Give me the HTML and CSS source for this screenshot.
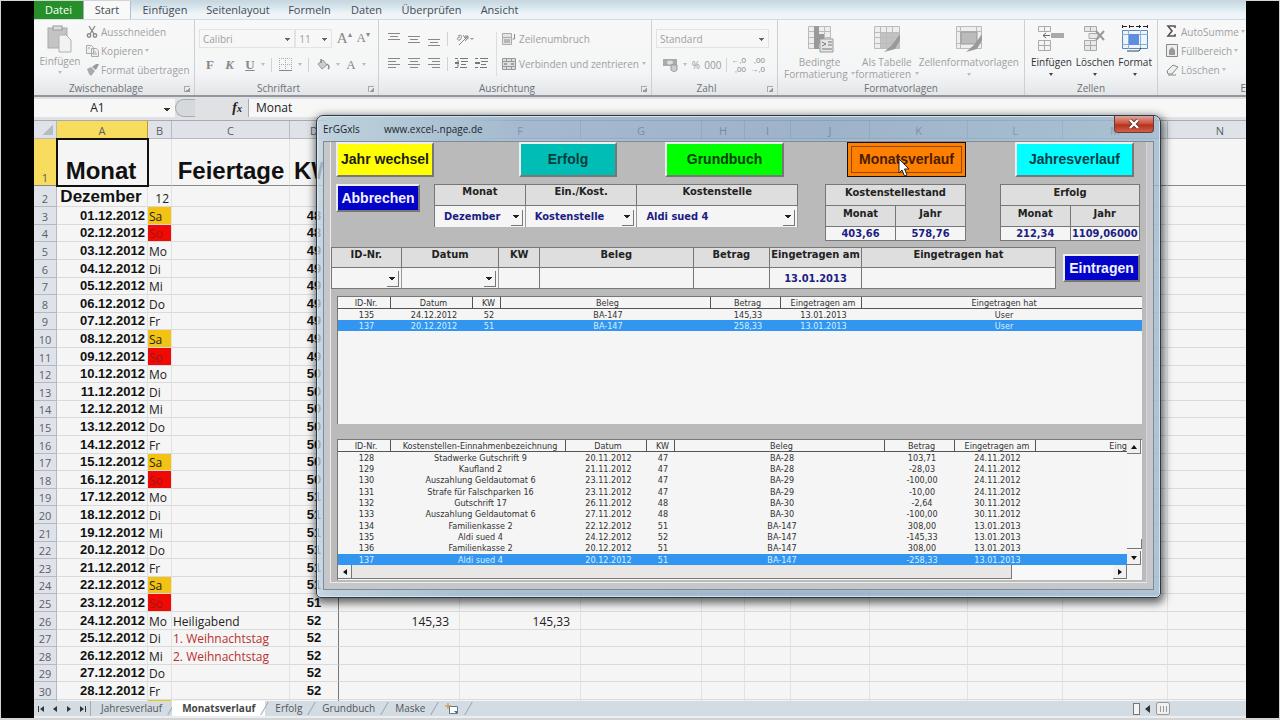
FILE: index.html
```html
<!DOCTYPE html>
<html lang="de">
<head>
<meta charset="utf-8">
<title>ErGGxls</title>
<link rel="stylesheet" href="styles.css">
</head>
<body>
<div class="screen">
<div class="app">
  <nav class="tabs">
    <button class="tab file">Datei</button>
    <button class="tab active">Start</button>
    <button class="tab t3">Einfügen</button>
    <button class="tab t4">Seitenlayout</button>
    <button class="tab t5">Formeln</button>
    <button class="tab t6">Daten</button>
    <button class="tab t7">Überprüfen</button>
    <button class="tab t8">Ansicht</button>
  </nav>

  <div class="ribbon">
    <section class="group">
      <div class="body">
        <button class="big paste">
          <svg width="26" height="28" viewBox="0 0 26 28"><rect x="1" y="3" width="19" height="20" fill="#c4c4c4" stroke="#a9a9a9"/><rect x="6" y="1" width="9" height="4" fill="#ddd" stroke="#999"/><path d="M12 10h7l5 5v12h-12z" fill="#f2f2f2" stroke="#b0b0b0"/></svg>
          <span>Einfügen</span><i class="dd"></i>
        </button>
        <div class="stack">
          <button class="row"><svg width="13" height="13" viewBox="0 0 13 13" fill="none" stroke="#8c8c8c" stroke-width="1.4"><path d="M3 1l5 8M9 1L4 9"/><circle cx="3" cy="10.500" r="1.700"/><circle cx="9" cy="10.500" r="1.700"/></svg><span>Ausschneiden</span></button>
          <button class="row"><svg width="13" height="13" viewBox="0 0 13 13" fill="#eee" stroke="#aaa"><path d="M.5 1.500h5l2 2v6h-7zM5.500 4.500h5l2 2v6h-7z"/><path d="M7 8h3M7 10h4M2 4h2"/></svg><span>Kopieren</span><i class="dd"></i></button>
          <button class="row"><svg width="13" height="13" viewBox="0 0 13 13"><path d="M1 6l4-2 4 4-4 5-2-2z" fill="#aaa"/><path d="M6 4l4-3 3 0-3 6z" fill="#999"/></svg><span>Format übertragen</span></button>
        </div>
      </div>
      <div class="caption">Zwischenablage<i class="launch"></i></div>
    </section>

    <section class="group">
      <div class="body lines">
        <div class="line">
          <select class="combo font" aria-label="Schriftart"><option>Calibri</option></select><select class="combo size" aria-label="Schriftgrad"><option>11</option></select>
          <button class="ser big-a">A<sup>▴</sup></button><button class="ser">A<sup>▾</sup></button>
        </div>
        <div class="line spread">
          <button class="ser b">F</button><button class="ser b it">K</button><button class="ser b un">U</button><i class="dd"></i><i class="sep"></i>
          <svg width="13" height="13" viewBox="0 0 13 13" fill="none" stroke="#aaa"><path d="M.5 0v12M6.500 0v12M12.500 0v12M0 .5h13M0 6.500h13" stroke-dasharray="1 1"/><path d="M0 12.500h13" stroke="#888"/></svg><i class="dd"></i><i class="sep"></i>
          <svg width="14" height="13" viewBox="0 0 14 13"><path d="M2 6l5-4 4 5-5 4z" fill="#ccc" stroke="#999"/><path d="M5 1v4M11 6c3 2 2 4 1 5" fill="none" stroke="#888" stroke-width="1.500"/></svg><i class="dd"></i>
          <button class="ser">A</button><i class="dd"></i>
        </div>
      </div>
      <div class="caption">Schriftart<i class="launch"></i></div>
    </section>

    <section class="group align">
      <div class="body cols">
        <div class="icongrid">
          <svg width="12" height="14" viewBox="0 0 12 14" stroke="#888"><path d="M0 1.500h12M2 4.500h8M0 7.500h12"/></svg>
          <svg width="12" height="14" viewBox="0 0 12 14" stroke="#888"><path d="M0 4.500h12M2 7.500h8M0 10.500h12"/></svg>
          <svg width="12" height="14" viewBox="0 0 12 14" stroke="#888"><path d="M0 7.500h12M2 10.500h8M0 13.500h12"/></svg>
          <i class="sep"></i>
          <svg class="wide" width="20" height="14" viewBox="0 0 20 14"><path d="M3 4c3-2 5 0 2 4M5 5c-4 0-3 4 0 3M8 3l3 4M9 6c3-3 5 1 1 3" stroke="#888" fill="none"/><path d="M4 13L13 4M13 4v3M13 4h-3" stroke="#888" fill="none"/><path d="M15 6h4l-2 2z" fill="#999"/></svg>
          <svg width="12" height="14" viewBox="0 0 12 14" stroke="#888"><path d="M0 1.500h12M0 4.500h8M0 7.500h12M0 10.500h8"/></svg>
          <svg width="12" height="14" viewBox="0 0 12 14" stroke="#888"><path d="M0 1.500h12M2 4.500h8M0 7.500h12M2 10.500h8"/></svg>
          <svg width="12" height="14" viewBox="0 0 12 14" stroke="#888"><path d="M0 1.500h12M4 4.500h8M0 7.500h12M4 10.500h8"/></svg>
          <i class="sep"></i>
          <svg width="13" height="14" viewBox="0 0 13 14" stroke="#777" fill="none"><path d="M0 1.500h3M5 1.500h8M6 4.500h7M6 7.500h5M0 10.500h3M5 10.500h7M3 3v7" /><path d="M0 6h4" stroke-width="2"/></svg>
          <svg width="13" height="14" viewBox="0 0 13 14" stroke="#777" fill="none"><path d="M0 1.500h3M5 1.500h8M6 4.500h7M6 7.500h5M0 10.500h3M5 10.500h7" /><path d="M0 6h5" stroke-width="2"/></svg>
        </div>
        <div class="wraps">
          <button class="row"><svg width="14" height="14" viewBox="0 0 14 14" fill="#e4e4e4" stroke="#aaa"><path d="M.5 1.500h9v4h-9zM.5 5.500h9v7h-9z"/><path d="M2 8h6M2 10h6M12.500 2v5h-2" stroke="#888" fill="none"/></svg><span>Zeilenumbruch</span></button>
          <button class="row"><svg width="14" height="14" viewBox="0 0 14 14" fill="#ddd" stroke="#999"><path d="M.5 1.500h13v11h-13zM.5 4.500h13M.5 9.500h13M4.500 1v3M9.500 1v3M4.500 10v3M9.500 10v3"/><path d="M2 7h3M9 7h3" stroke="#666"/></svg><span>Verbinden und zentrieren</span><i class="dd"></i></button>
        </div>
      </div>
      <div class="caption">Ausrichtung<i class="launch"></i></div>
    </section>

    <section class="group">
      <div class="body lines">
        <div class="line"><select class="combo std" aria-label="Zahlenformat"><option>Standard</option></select></div>
        <div class="line spread">
          <svg width="16" height="14" viewBox="0 0 16 14"><path d="M0 1h14v7H0z" fill="#aaa"/><ellipse cx="7" cy="4.500" rx="3" ry="2" fill="#ddd"/><path d="M8 7h6v5c-2 2-4 2-6 0z" fill="#ccc" stroke="#999"/></svg><i class="dd"></i>
          <button class="num">%</button><button class="num">000</button><i class="sep"></i>
          <button class="dec"><span>←,0</span><span>,00</span></button><button class="dec"><span>,00</span><span>→,0</span></button>
        </div>
      </div>
      <div class="caption">Zahl<i class="launch"></i></div>
    </section>

    <section class="group">
      <div class="body bigs">
        <button class="big two"><svg width="28" height="28" viewBox="0 0 28 28"><path d="M2.500 1.500h22v22h-22z" fill="#eee" stroke="#bbb"/><path d="M2 6.500h22M2 12.500h22M2 18.500h22M18.500 2v22" stroke="#bbb"/><path d="M8 1h5v8h5v9h-5v6h-5z" fill="#999"/><path d="M14 14h13v13h-13z" fill="#e6e6e6" stroke="#999"/><path d="M16 17l4 2-4 2M22 17h4M22 20h4M16 24h10" stroke="#777" fill="none"/></svg><span>Bedingte<br>Formatierung <i class="dd"></i></span></button>
        <button class="big two"><svg width="28" height="28" viewBox="0 0 28 28"><path d="M1.500 1.500h25v22h-25z" fill="#eee" stroke="#bbb"/><path d="M8 7h18v16h-18z" fill="#c2c2c2"/><path d="M1 7.500h25M1 12.500h25M1 18.500h25M7.500 2v22M13.500 2v22M19.500 2v22" stroke="#bbb"/><path d="M27 9l-8 11-8 7 11-3 5-9z" fill="#999"/></svg><span>Als Tabelle<br>formatieren <i class="dd"></i></span></button>
        <button class="big"><svg width="28" height="28" viewBox="0 0 28 28"><path d="M1.500 1.500h25v22h-25z" fill="#eee" stroke="#bbb"/><path d="M1 6.500h25M1 18.500h25M5.500 2v22M21.500 2v22" stroke="#bbb"/><path d="M6 7h16v12h-16z" fill="#bbb" stroke="#999"/><path d="M27 9l-8 11-8 7 11-3 5-9z" fill="#999"/></svg><span>Zellenformatvorlagen</span><i class="dd"></i></button>
      </div>
      <div class="caption plain">Formatvorlagen</div>
    </section>

    <section class="group">
      <div class="body bigs live">
        <button class="big"><svg width="28" height="28" viewBox="0 0 28 28"><path d="M1.500 1.500h12v5h-12zM1.500 15.500h12v10h-12zM7.500 1v5M7.500 15v10M1 20.500h12" fill="#f4f4f4" stroke="#aaa"/><path d="M14 8h13v5h-13z" fill="#aaa"/><path d="M6 10.500h7M9 8l-3 2.500 3 2.500" stroke="#666" fill="none"/></svg><span>Einfügen</span><i class="dd"></i></button>
        <button class="big"><svg width="28" height="28" viewBox="0 0 28 28"><path d="M3.500 1.500h12v5h-12zM3.500 15.500h12v10h-12zM9.500 1v5M9.500 15v10M3 20.500h12M8 8.500h9v5h-9z" fill="#e8e8e8" stroke="#aaa"/><path d="M15 6l8 9M23 6l-8 9" stroke="#999" stroke-width="2"/></svg><span>Löschen</span><i class="dd"></i></button>
        <button class="big"><svg width="28" height="28" viewBox="0 0 28 28"><path d="M1.500 5.500h25v18h-25z" fill="#eef4fb" stroke="#5a88b8"/><path d="M1 9.500h26M1 19.500h26M7.500 5v19M19.500 5v19" stroke="#8ab0d6"/><path d="M8 9h10v11h-10z" fill="#5d8de0"/><path d="M1 1.500h26M1.500 0v3M8.500 0v3M18.500 0v3M26.500 0v3" stroke="#223" stroke-dasharray="5 2"/><path d="M6 26h12l2-3" stroke="#345" fill="none"/></svg><span>Format</span><i class="dd"></i></button>
      </div>
      <div class="caption plain">Zellen</div>
    </section>

    <section class="group last">
      <div class="body">
        <div class="stack">
          <button class="row"><svg width="13" height="13" viewBox="0 0 13 13"><path d="M9 3V1H2l4 5-4 5h7V9" fill="none" stroke="#555" stroke-width="1.600"/></svg><span>AutoSumme</span><i class="dd"></i></button>
          <button class="row"><svg width="13" height="13" viewBox="0 0 13 13"><path d="M.5 .5h11v12h-11z" fill="#eee" stroke="#888"/><path d="M3 6h6l-3-3zM3 6h6v5H3z" fill="#999"/></svg><span>Füllbereich</span><i class="dd"></i></button>
          <button class="row"><svg width="13" height="13" viewBox="0 0 13 13"><path d="M1 8l6-6 5 2-6 7H2z" fill="#eee" stroke="#888"/><path d="M2 12h8" stroke="#888"/></svg><span>Löschen</span><i class="dd"></i></button>
        </div>
      </div>
      <div class="caption edge">E</div>
    </section>
  </div>

  <div class="formula">
    <select class="namebox" aria-label="Namenfeld"><option>A1</option></select>
    <div class="fx"><i class="knob"></i><em>f<small>x</small></em></div>
    <input class="content" aria-label="Bearbeitungsleiste" value="Monat">
  </div>

  <main class="sheet">
    <table class="cells">
      <colgroup><col class="c0"><col class="cA"><col class="cB"><col class="cC"><col class="cD"><col class="cE"><col class="cE"><col class="cE"><col class="cH"><col class="cI"><col class="cJ"><col class="cK"><col class="cL"><col class="cM"><col></colgroup>
      <thead><tr id="letters"></tr></thead>
      <tbody id="days"></tbody>
    </table>
  </main>

  <footer class="sheets">
    <div class="nav">
      <button aria-label="Erstes Blatt"><svg width="8" height="8" viewBox="0 0 8 8"><path d="M1 1h1v6h-1zM7 1v6l-4-3z" fill="#333"/></svg></button>
      <button aria-label="Vorheriges Blatt"><svg width="8" height="8" viewBox="0 0 8 8"><path d="M6 1v6l-4-3z" fill="#333"/></svg></button>
      <button aria-label="Nächstes Blatt"><svg width="8" height="8" viewBox="0 0 8 8"><path d="M2 1v6l4-3z" fill="#333"/></svg></button>
      <button aria-label="Letztes Blatt"><svg width="8" height="8" viewBox="0 0 8 8"><path d="M6 1h1v6h-1zM1 1v6l4-3z" fill="#333"/></svg></button>
    </div>
    <button class="st">Jahresverlauf</button><button class="st on">Monatsverlauf</button><button class="st">Erfolg</button><button class="st">Grundbuch</button><button class="st">Maske</button>
    <button class="st new" aria-label="Neues Blatt"><svg width="14" height="12" viewBox="0 0 14 12"><path d="M4.500 3.500h8v7h-8z" fill="#fff" stroke="#678"/><path d="M3 0v6M0 3h6" stroke="#d78b2c"/><path d="M9 8l3 0 0 3z" fill="#567"/></svg></button>
    <div class="hs"><i class="split"></i><svg width="6" height="8" viewBox="0 0 6 8"><path d="M5 0v8l-5-4z" fill="#333"/></svg><i class="grip"></i></div>
  </footer>
</div>

<div class="dialog" role="dialog" aria-label="ErGGxls">
  <header class="title"><span class="name">ErGGxls</span><span>www.excel-.npage.de</span><button class="close" aria-label="Schließen"><svg width="12" height="10" viewBox="0 0 12 10"><path d="M2 1l8 8M10 1l-8 8" stroke="#6b2a22" stroke-width="4"/><path d="M2 1l8 8M10 1l-8 8" stroke="#fff" stroke-width="2.400"/></svg></button></header>
  <div class="client">
    <div class="form">
      <div class="actions">
        <button class="act yellow">Jahr wechsel</button>
        <button class="act teal">Erfolg</button>
        <button class="act green">Grundbuch</button>
        <button class="act orange">Monatsverlauf<svg class="pointer" width="12" height="19" viewBox="0 0 12 19"><path d="M1 1v14l3-3 2.500 6 2.500-1-2.500-6h4.500z" fill="#fff" stroke="#222"/></svg></button>
        <button class="act cyan">Jahresverlauf</button>
      </div>

      <div class="upper">
        <button class="act blue">Abbrechen</button>
        <div class="pick">
          <label for="m">Monat</label><label for="e">Ein./Kost.</label><label for="k">Kostenstelle</label>
          <select id="m"><option>Dezember</option></select><select id="e"><option>Kostenstelle</option></select><select id="k"><option>Aldi sued 4</option></select>
        </div>
        <table class="sum"><tr><th colspan="2">Kostenstellestand</th></tr><tr><th>Monat</th><th>Jahr</th></tr><tr><td>403,66</td><td>578,76</td></tr></table>
        <table class="sum"><tr><th colspan="2">Erfolg</th></tr><tr><th>Monat</th><th>Jahr</th></tr><tr><td>212,34</td><td>1109,06000</td></tr></table>
      </div>

      <div class="entry">
        <div class="fields">
          <label for="i1">ID-Nr.</label><label for="i2">Datum</label><label for="i3">KW</label><label for="i4">Beleg</label><label for="i5">Betrag</label><label for="i6">Eingetragen am</label><label for="i7">Eingetragen hat</label>
          <select id="i1"><option></option></select><select id="i2"><option></option></select><input id="i3"><input id="i4"><input id="i5"><input id="i6" value="13.01.2013"><input id="i7">
        </div>
        <button class="act blue">Eintragen</button>
      </div>

      <div class="list first">
        <table>
          <colgroup><col class="w53"><col class="w82"><col class="w28"><col class="w210"><col class="w70"><col class="w81"><col></colgroup>
          <thead><tr><th>ID-Nr.</th><th>Datum</th><th>KW</th><th>Beleg</th><th>Betrag</th><th>Eingetragen am</th><th>Eingetragen hat</th></tr></thead>
          <tbody id="list1"></tbody>
        </table>
      </div>

      <div class="list second">
        <table>
          <colgroup><col class="w53"><col class="w175"><col class="w81"><col class="w28"><col class="w210"><col class="w70"><col class="w81"><col></colgroup>
          <thead><tr><th>ID-Nr.</th><th>Kostenstellen-Einnahmenbezeichnung</th><th>Datum</th><th>KW</th><th>Beleg</th><th>Betrag</th><th>Eingetragen am</th><th class="cut">Eing</th></tr></thead>
          <tbody id="list2"></tbody>
        </table>
        <div class="vbar"><button class="up" aria-label="Nach oben"></button><i></i><button class="down" aria-label="Nach unten"></button></div>
        <div class="hbar"><button class="left" aria-label="Nach links"></button><i></i><button class="right" aria-label="Nach rechts"></button></div>
      </div>
    </div>
  </div>
</div>
</div>
<script src="app.js"></script>
</body>
</html>
```

FILE: styles.css
```css
* { box-sizing: border-box; }
body { margin: 0; height: 100vh; font-family: "Open Sans", "Noto Sans", sans-serif; font-size: 11px; overflow: hidden; }
button, select, input { font: inherit; color: inherit; margin: 0; padding: 0; border: 0; background: none; border-radius: 0; }
button { white-space: nowrap; }
select { appearance: none; }
svg { flex: none; display: block; }
.screen { position: relative; height: 100vh; background: #000; border: 1px solid #d4d4d4; border-bottom-width: 2px; padding: 0 33px; }
.app { height: 100%; display: flex; flex-direction: column; background: #f5f5f5; overflow: hidden; }

.tabs { flex: none; height: 18px; display: flex; background: linear-gradient(#c3d8e4, #eef4f7 70%); color: #454b52; }
.tab { line-height: 16px; text-align: center; }
.file { width: 49px; background: #25902a; color: #fff; }
.active { width: 48px; background: #f8f9f9; border-left: 1px solid #aab; border-right: 1px solid #bbc; }
.t3 { width: 68px; } .t4 { width: 78px; } .t5 { width: 65px; } .t6 { width: 49px; } .t7 { width: 81px; } .t8 { width: 55px; }

.ribbon { flex: none; height: 78px; display: flex; font-size: 10px; color: #a0a0a0; background: linear-gradient(#f8f8f8, #f4f5f6 70%, #e3e6e9); border-bottom: 2px solid #93979b; border-top: 1px solid #d6dade; }
.group { flex: none; display: flex; flex-direction: column; border-right: 1px solid #cdd0d3; white-space: nowrap; }
.group:nth-child(1) { width: 161px; } .group:nth-child(2) { width: 184px; } .group:nth-child(3) { width: 273px; }
.group:nth-child(4) { width: 126px; } .group:nth-child(5) { width: 247px; } .group:nth-child(6) { width: 133px; }
.group.last { flex: 1; width: 0; overflow: hidden; border: 0; }
.body { flex: 1; display: flex; min-height: 0; }
.caption { position: relative; flex: none; height: 14px; line-height: 14px; text-align: center; color: #6d7175; padding-right: 16px; }
.caption.plain { padding: 0; }
.caption.edge { text-align: right; padding: 0; }
.launch { position: absolute; right: 4px; top: 5px; width: 6px; height: 6px; border-left: 1px solid #aaa; border-top: 1px solid #aaa; background: linear-gradient(135deg, transparent 50%, #999 50%); }
.dd { display: inline-block; border: 2px solid transparent; border-top: 3px solid #bbb; border-bottom: 0; flex: none; }
.sep { width: 1px; height: 14px; background: #d2d2d2; }
.big { display: flex; flex-direction: column; align-items: center; padding-top: 5px; line-height: 12px; gap: 2px; }
.big .dd { margin-top: 2px; }
.paste { width: 52px; }
.stack { display: flex; flex-direction: column; padding: 2px 0 0; }
.row { display: flex; align-items: center; gap: 3px; height: 20px; }
.stack .row { height: 19px; gap: 2px; }
.last .stack { padding-left: 8px; }
.lines { flex-direction: column; gap: 7px; padding: 9px 8px 0 4px; }
.line { display: flex; align-items: center; height: 19px; gap: 5px; }
.spread { justify-content: space-between; padding: 0 4px 0 7px; gap: 0; }
.combo { height: 19px; border: 1px solid #e3e3e3; padding-left: 3px; background: linear-gradient(#666, #666) no-repeat right 4px top 8px / 5px 1px, linear-gradient(#666, #666) no-repeat right 5px top 9px / 3px 1px, linear-gradient(#666, #666) no-repeat right 6px top 10px / 1px 1px; }
.font { width: 101px; margin-right: -5px; } .size { width: 38px; }
.std { width: 118px; }
.ser { font-family: "Liberation Serif", serif; font-size: 13px; color: #888; }
.ser sup { font-size: 8px; }
.big-a { font-size: 15px; }
.b { font-weight: bold; margin-right: 5px; } .it { font-style: italic; } .un { text-decoration: underline; margin-right: 0; }
.num { font-size: 10px; color: #999; }
.dec { font-size: 8px; line-height: 9px; color: #888; text-align: right; font-family: "Liberation Sans", sans-serif; }
.dec span { display: block; }
.cols { padding: 12px 0 0 9px; }
.icongrid { display: grid; grid-template-columns: 20px 20px 19px 8px 20px 20px; grid-template-rows: 25px 20px; align-items: start; width: 108px; }
.icongrid .wide { grid-column: span 2; }
.wraps { border-left: 1px solid #ddd; padding-left: 5px; height: 44px; display: flex; flex-direction: column; gap: 6px; }
.wraps .row { height: 19px; margin-top: -3px; margin-bottom: 3px; }
.bigs { justify-content: space-between; padding: 0 5px 0 6px; }
.bigs .big { gap: 3px; }
.two .dd { margin: 0 0 3px 1px; }
.live { color: #333; }
.live .dd { border-top-color: #444; }

.formula { flex: none; height: 24px; display: flex; padding: 2px 0 3px; background: #dfe1e4; line-height: 18px; font-size: 12px; color: #222; border-bottom: 1px solid #aaa; }
.namebox { width: 141px; text-align: center; padding-right: 14px; background: linear-gradient(#333, #333) no-repeat right 5px top 9px / 6px 1px, linear-gradient(#333, #333) no-repeat right 6px top 10px / 4px 1px, linear-gradient(#333, #333) no-repeat right 7px top 11px / 2px 1px, #f7f7f7; text-align-last: center; }
.fx { width: 74px; display: flex; justify-content: space-between; padding-right: 6px; font-family: "Liberation Serif", serif; font-size: 14px; font-weight: bold; border-right: 1px solid #aaa; }
.fx small { font-size: 10px; }
.knob { width: 20px; border: 1px solid #aaa; border-right: 0; border-radius: 9px 0 0 9px; background: #d5d8dc; }
.content { flex: 1; min-width: 0; background: #f7f7f7; padding-left: 7px; }

.sheet { flex: 1; min-height: 0; overflow: hidden; }
.cells { width: calc(100% + 27px); table-layout: fixed; border-collapse: separate; border-spacing: 0; font-size: 12px; color: #222; }
.cells th, .cells td { padding: 0; border-right: 1px solid #e2e2e2; border-bottom: 1px solid #dadada; line-height: 15px; overflow: hidden; white-space: nowrap; vertical-align: bottom; }
.c0 { width: 23px; } .cA { width: 91px; } .cB { width: 24px; } .cC { width: 118px; } .cD { width: 49px; } .cE { width: 121px; }
.cH { width: 43px; } .cI { width: 46px; } .cJ { width: 79px; } .cK { width: 98px; } .cL { width: 95px; } .cM { width: 105px; }
.cells th { font-weight: normal; font-size: 11px; text-align: center; background: #dfe3e9; color: #5a5f66; border-color: #b5bac1; }
.cells thead th { height: 18px; }
.cells .sel { background: #f7dc5e; border-color: #b99b2a; }
.cells .corner { background: linear-gradient(135deg, transparent 50%, #b6bcc4 50%) no-repeat right 3px bottom 3px / 10px 10px, #dfe3e9; }
.cells .r1 { height: 47px; } .cells .r2 { height: 21px; }
.cells .d { height: 18px; } .cells .d.short { height: 17px; }
.cells .r1 th, .cells .r1 td { border-bottom-color: #888; }
.cells .r1 td { font: bold 24px/28px "Liberation Sans", Arial, sans-serif; color: #111; text-align: center; overflow: visible; }
.cells .r1 td:nth-child(2) { outline: 2px solid #111; outline-offset: -1px; }
.cells .r1 td:nth-child(5) { text-align: left; padding-left: 4px; overflow: hidden; }
.cells td:nth-child(5) { border-right-color: #777; text-align: center; font: bold 13px/16px "Liberation Sans", Arial, sans-serif; color: #111; }
.cells td:nth-child(2) { text-align: right; font: bold 13px/16px "Liberation Sans", Arial, sans-serif; color: #111; padding-right: 2px; }
.cells .r2 td:nth-child(2) { font-size: 17px; line-height: 19px; text-align: center; }
.cells .r1 td:nth-child(2) { font-size: 24px; line-height: 28px; text-align: center; }
.cells .r1 td:nth-child(5) { font-size: 24px; line-height: 28px; }
.cells td:nth-child(3), .cells td:nth-child(4) { padding-left: 1px; }
.cells .r2 td:nth-child(3) { text-align: right; padding-right: 2px; }
.cells td.sa { background: #f2c313; }
.cells td.so { background: #f00a06; color: #a5150c; }
.cells td.hol { color: #b93030; }
.cells td.val { text-align: right; padding-right: 10px; }

.sheets { flex: none; height: 17px; display: flex; align-items: stretch; background: #d3dbe3; color: #555; font-size: 10px; border-bottom: 2px solid #e9eef3; }
.nav { width: 57px; display: flex; align-items: center; justify-content: space-around; border-right: 1px solid #aaa; }
.st { position: relative; padding: 0 10px; line-height: 15px; }
.st::after { content: ""; position: absolute; right: 0; top: 1px; bottom: 1px; width: 1px; background: #98a2ac; transform: skewX(-30deg); }
.st.on { background: #fff; font-weight: bold; color: #444; padding: 0 10px; }
.st.new { width: 34px; }
.hs { margin-left: auto; width: 113px; display: flex; align-items: center; gap: 5px; }
.split { width: 7px; height: 12px; border: 1px solid #777; background: #f4f4f4; }
.grip { width: 14px; height: 13px; border: 1px solid #999; border-radius: 2px; background: repeating-linear-gradient(90deg, #999 0 1px, transparent 1px 3px) no-repeat center / 7px 6px, #f0f0f0; }

.dialog { position: absolute; left: 315px; right: 118px; top: 114px; border: 1px solid #2d3a45; border-radius: 7px 7px 5px 5px; padding: 0 6px 7px; background: linear-gradient(90deg, rgba(190, 209, 222, .78), #bccfdc 2%, #a9c0d1 18%, rgba(140, 168, 196, .7) 24%, rgba(126, 156, 186, .68) 60%, rgba(155, 182, 204, .78)); box-shadow: inset 0 0 0 1px rgba(225, 240, 250, .7), 1px 3px 9px 2px rgba(0, 0, 0, .6); }
.title { display: flex; height: 25px; align-items: center; color: #20262c; font-size: 10px; }
.name { width: 61px; }
.close { align-self: flex-start; margin: 0 0 0 auto; width: 40px; height: 17px; display: flex; align-items: center; justify-content: center; border: 1px solid #6a3a38; border-top: 0; border-radius: 0 0 4px 4px; background: linear-gradient(#dba79d, #cb4a35 50%, #b5301c 55%, #d0604a); }
.client { background: #c6c7ca; border: 1px solid #7f8b95; padding: 0 6px 6px; }
.form { background: #bababa; border: 1px solid #ececec; border-top: 0; border-right-color: #d6d6d6; padding: 0 4px 2px 0; font-family: "DejaVu Sans Condensed", "DejaVu Sans", sans-serif; display: flex; flex-direction: column; }
.act { font: bold 14px/18px "Liberation Sans", Arial, sans-serif; color: #1c1c1c; border: 2px solid; border-color: #eee #777 #777 #eee; }
.actions { display: grid; grid-template-columns: 98fr 85fr 98fr 48fr 119fr 63fr 119fr 49fr 119fr 8fr; padding-left: 5px; height: 35px; }
.actions .act { padding-bottom: 2px; }
.actions .act:nth-child(1) { grid-column: 1; } .actions .act:nth-child(2) { grid-column: 3; } .actions .act:nth-child(3) { grid-column: 5; }
.actions .act:nth-child(4) { grid-column: 7; } .actions .act:nth-child(5) { grid-column: 9; }
.yellow { background: #ffff00; } .teal { background: #00bdb6; color: #093d3b; } .green { background: #00ff00; color: #063c06; }
.orange { position: relative; background: #ff8000; color: #4a1c00; border: 1px solid #111; outline: 1px solid #8a4a10; outline-offset: -5px; }
.cyan { background: #00ffff; color: #063c46; }
.blue { background: #0202c8; color: #f2f2ff; }
.pointer { position: absolute; left: 50px; top: 15px; }
.upper { display: grid; grid-template-columns: 84fr 14fr 364fr 27fr 141fr 34fr 140fr 2fr; padding-left: 5px; margin-top: 7px; height: 57px; align-items: start; font-weight: bold; }
.upper .act { height: 28px; grid-column: 1; }
.pick { grid-column: 3; display: grid; grid-template-columns: 91fr 112fr 161fr; grid-template-rows: 21px 21px; border: 1px solid #777; border-right: 0; border-bottom: 0; }
.upper .sum:nth-child(3) { grid-column: 5; } .upper .sum:nth-child(4) { grid-column: 7; }
label { background: #dedede; border-right: 1px solid #777; border-bottom: 1px solid #777; text-align: center; line-height: 14px; color: #222; white-space: nowrap; }
.form select { border-right: 1px solid #999; color: #1c1c84; padding-left: 9px; min-width: 0; width: 100%;
  background: linear-gradient(#222, #222) no-repeat right 6px top 9px / 6px 1px, linear-gradient(#222, #222) no-repeat right 7px top 10px / 4px 1px, linear-gradient(#222, #222) no-repeat right 8px top 11px / 2px 1px, linear-gradient(#777, #777) no-repeat right 2px bottom 1px / 1px 16px, linear-gradient(#777, #777) no-repeat right 2px bottom 1px / 12px 1px, #f5f5f5; }
.sum { width: 100%; table-layout: fixed; border-collapse: collapse; color: #222; }
.sum th, .sum td { border: 1px solid #777; padding: 0; text-align: center; }
.sum th { height: 21px; line-height: 15px; background: #dedede; vertical-align: top; }
.sum td { height: 14px; line-height: 13px; background: #f5f5f5; color: #1c1c84; }
.entry { display: flex; align-items: center; gap: 7px; margin-top: 6px; font-weight: bold; padding-right: 2px; }
.fields { flex: 1; display: grid; grid-template-columns: 70fr 98fr 41fr 154fr 77fr 92fr 195fr; grid-template-rows: 20px 20px; border: 1px solid #777; border-right: 0; min-width: 0; }
.fields input { min-width: 0; width: 100%; background: #f5f5f5; border-right: 1px solid #777; text-align: center; color: #1c1c84; }
.entry .act { width: 77px; height: 28px; flex: none; }
.list { margin: 7px 0 0 6px; background: #f5f5f5; border-top: 1px solid #777; border-left: 1px solid #777; font-size: 9px; color: #333; }
.list table { width: 100%; table-layout: fixed; border-collapse: separate; border-spacing: 0; }
.list th, .list td { padding: 0 0 0 4px; font-weight: normal; text-align: center; line-height: 10px; white-space: nowrap; }
.list th { height: 12px; border-right: 1px solid #555; border-bottom: 1px solid #555; }
.list th:last-child { border-right: 0; }
.list td { height: 11px; }
.list tr:nth-child(3n) td { height: 12px; }
.list .hit td { background: #3296f0; color: #d5f0ff; }
.w53 { width: 53px; } .w82 { width: 82px; } .w28 { width: 28px; } .w210 { width: 210px; } .w70 { width: 70px; } .w81 { width: 81px; } .w175 { width: 175px; }
.first { height: 128px; }
.second { margin-top: 15px; display: grid; grid-template-columns: 1fr 15px; grid-template-rows: auto 15px; }
.list .cut { text-align: right; }
.vbar { display: flex; flex-direction: column; background: #f6f6f6; }
.vbar i { flex: 1; border-bottom: 1px solid #777; margin-bottom: 2px; background: linear-gradient(#777, #777) no-repeat right bottom / 1px 9px; }
.vbar button, .hbar button { width: 14px; height: 14px; background: #f0f0f0; border-right: 1px solid #777; border-bottom: 1px solid #777; display: flex; align-items: center; justify-content: center; flex: none; }
.vbar button::before, .hbar button::before { content: ""; border: 3px solid transparent; }
.vbar .up::before { border-bottom: 4px solid #111; border-top: 0; }
.vbar .down::before { border-top: 4px solid #111; border-bottom: 0; }
.hbar .left::before { border-right: 4px solid #111; border-left: 0; }
.hbar .right::before { border-left: 4px solid #111; border-right: 0; }
.hbar { display: flex; background: #f8f8f8; }
.hbar i { flex: 1; margin-right: 101px; background: #e9e7e5; border-right: 1px solid #777; border-bottom: 1px solid #777; height: 14px; }
```

FILE: app.js
```js
const make = (tag, text, cls) => {
  const el = document.createElement(tag);
  el.textContent = text;
  if (cls) el.className = cls;
  return el;
};

const letters = document.getElementById("letters");
["", ..."ABCDEFGHIJKLMN"].forEach((l) => letters.append(make("th", l, l === "A" ? "sel" : l ? "" : "corner")));

const days = document.getElementById("days");
const addRow = (num, cells, cls) => {
  const tr = make("tr", "", cls);
  tr.append(make("th", num, num === 1 ? "sel" : ""));
  for (let i = 0; i < 14; i++) {
    const [text, c] = [].concat(cells[i] || "");
    tr.append(make("td", text, c));
  }
  days.append(tr);
};
addRow(1, ["Monat", "", "Feiertage", "KW"], "r1");
addRow(2, ["Dezember", "12"], "r2");

const names = ["Sa", "So", "Mo", "Di", "Mi", "Do", "Fr"];
const holidays = { 24: ["Heiligabend"], 25: ["1. Weihnachtstag", "hol"], 26: ["2. Weihnachtstag", "hol"] };
for (let d = 1; d <= 28; d++) {
  const name = names[(d - 1) % 7];
  const week = 48 + Math.floor((d + 4) / 7);
  const value = d === 24 ? ["145,33", "val"] : "";
  addRow(d + 2, [
    String(d).padStart(2, "0") + ".12.2012",
    [name, name === "Sa" ? "sa" : name === "So" ? "so" : ""],
    holidays[d], String(week), value, value
  ], d % 5 === 2 || d % 5 === 0 ? "d short" : "d");
}
addRow("", ["", ["", "sa"]], "d");

const fill = (id, rows) => {
  const body = document.getElementById(id);
  rows.forEach((row, i) => {
    const tr = make("tr", "", i === rows.length - 1 ? "hit" : "");
    row.forEach((c) => tr.append(make("td", c)));
    body.append(tr);
  });
};
fill("list1", [
  ["135", "24.12.2012", "52", "BA-147", "145,33", "13.01.2013", "User"],
  ["137", "20.12.2012", "51", "BA-147", "258,33", "13.01.2013", "User"]
]);
fill("list2", [
  ["128", "Stadwerke Gutschrift 9", "20.11.2012", "47", "BA-28", "103,71", "24.11.2012", ""],
  ["129", "Kaufland 2", "21.11.2012", "47", "BA-28", "-28,03", "24.11.2012", ""],
  ["130", "Auszahlung Geldautomat 6", "23.11.2012", "47", "BA-29", "-100,00", "24.11.2012", ""],
  ["131", "Strafe für Falschparken  16", "23.11.2012", "47", "BA-29", "-10,00", "24.11.2012", ""],
  ["132", "Gutschrift 17", "26.11.2012", "48", "BA-30", "-2,64", "30.11.2012", ""],
  ["133", "Auszahlung Geldautomat 6", "27.11.2012", "48", "BA-30", "-100,00", "30.11.2012", ""],
  ["134", "Familienkasse 2", "22.12.2012", "51", "BA-147", "308,00", "13.01.2013", ""],
  ["135", "Aldi sued 4", "24.12.2012", "52", "BA-147", "-145,33", "13.01.2013", ""],
  ["136", "Familienkasse 2", "20.12.2012", "51", "BA-147", "308,00", "13.01.2013", ""],
  ["137", "Aldi sued 4", "20.12.2012", "51", "BA-147", "-258,33", "13.01.2013", ""]
]);
```
